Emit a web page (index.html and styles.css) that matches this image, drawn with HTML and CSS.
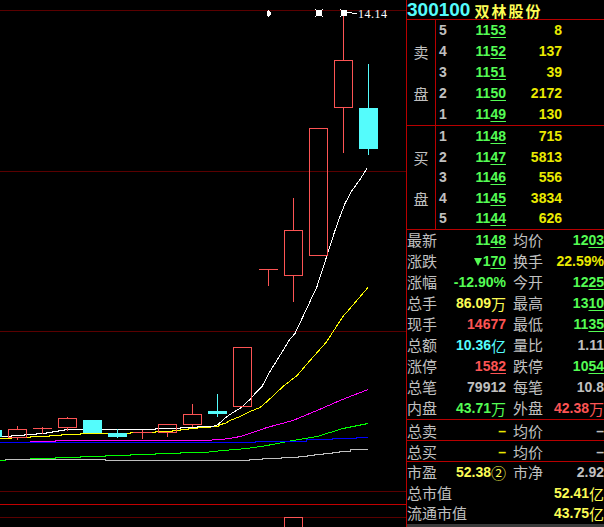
FILE: index.html
```html
<!DOCTYPE html>
<html lang="zh">
<head>
<meta charset="utf-8">
<title>300100 双林股份</title>
<link rel="stylesheet" href="styles.css">
</head>
<body>
<svg class="chart" width="406" height="527" viewBox="0 0 406 527" xmlns="http://www.w3.org/2000/svg">
  <line class="gd" x1="0" y1="10.5" x2="406" y2="10.5"/>
  <line class="gd" x1="0" y1="171.5" x2="406" y2="171.5"/>
  <line class="gd" x1="0" y1="331.5" x2="406" y2="331.5"/>
  <line class="gd" x1="0" y1="491.5" x2="406" y2="491.5"/>
  <line class="gb" x1="0" y1="504.5" x2="406" y2="504.5"/>
  <line class="gd" x1="0" y1="517.5" x2="406" y2="517.5"/>

  <polyline class="ma m60" points="0,460.5 5,460.5 5,459.5 30,459.5 30,458.5 55,458.5 55,457.5 80,457.5 80,456.5 105,456.5 105,455.5 130,455.5 130,454.5 155,454.5 155,453.5 180,453.5 180,452.5 205,452.5 223,450.5 247,448.5 267,445.5 293,440.5 317,436.5 343,428.5 368,423.5"/>
  <polyline class="ma m120" points="5,459.5 105,459.5 105,460.5 249,460.5 249,459.5 262,459.5 262,458.5 281,458.5 281,457.5 298,457.5 298,456.5 307,456.5 307,455.5 314,455.5 314,454.5 323,454.5 323,453.5 332,453.5 332,452.5 339,452.5 339,451.5 350,451.5 350,449.5 368,449.5"/>
  <polyline class="ma m30" points="0,442.5 255,442.5 255,441.5 306,441.5 306,439.5 332,439.5 332,438.5 356,438.5 356,437.5 368,437.5"/>
  <polyline class="ma m20" points="30,441.5 55,441.5 55,440.5 205,440.5 220,439.5 230,438.5 240,436.5 253,432.5 267,427.5 293,420.5 317,410.5 340,400.5 368,389.5"/>
  <polyline class="ma m10" points="0,438.5 11,438.5 11,437.5 30,437.5 30,436.5 49,436.5 49,435.5 61,435.5 61,434.5 80,434.5 80,433.5 130,433.5 130,432.5 155,432.5 155,431.5 172,431.5 172,430.5 180,430.5 180,429.5 188,429.5 188,428.5 197,428.5 197,427.5 210,427.5 212,426.5 218,426.5 220,424.5 225,423.5 230,420.5 240,416.5 250,411.5 260,407.5 267,401.5 283,386.5 297,375.5 310,360.5 326,342.5 343,316.5 356,301.5 368,287.5"/>
  <polyline class="ma m5" points="0,436.5 11,436.5 11,435.5 24,435.5 24,434.5 36,434.5 36,433.5 46,433.5 46,432.5 52,432.5 52,431.5 58,431.5 58,430.5 64,430.5 64,429.5 155,429.5 155,428.5 180,428.5 180,427.5 197,427.5 197,426.5 213,426.5 218,424.5 227,416.5 233,412.5 240,408.5 250,399.5 256,392.5 262,386.5 270,371.5 283,350.5 289,340.5 295,333.5 303,316.5 317,286.5 327,255.5 335,230.5 340,216.5 345,203.5 352,190.5 360,179.5 367,168.5"/>

  <rect class="kd" x="-17" y="430" width="19" height="7"/>

  <line class="wu" x1="17.5" y1="426" x2="17.5" y2="429"/>
  <line class="wu" x1="17.5" y1="437" x2="17.5" y2="440"/>
  <rect class="ku" x="8.5" y="429.5" width="18" height="8"/>

  <line class="wu" x1="42.5" y1="427" x2="42.5" y2="434"/>
  <line class="wu" x1="33" y1="428.5" x2="52" y2="428.5"/>

  <line class="wu" x1="67.5" y1="417" x2="67.5" y2="418"/>
  <line class="wu" x1="67.5" y1="427" x2="67.5" y2="431"/>
  <rect class="ku" x="58.5" y="418.5" width="18" height="9"/>

  <rect class="kd" x="83" y="420" width="19" height="13"/>

  <line class="wd" x1="117.5" y1="429" x2="117.5" y2="438"/>
  <rect class="kd" x="108" y="433" width="19" height="4"/>

  <line class="wu" x1="142.5" y1="430" x2="142.5" y2="439"/>
  <line class="wu" x1="133" y1="432.5" x2="152" y2="432.5"/>

  <line class="wu" x1="167.5" y1="432" x2="167.5" y2="437"/>
  <rect class="ku" x="158.5" y="424.5" width="18" height="8"/>

  <line class="wu" x1="192.5" y1="404" x2="192.5" y2="414"/>
  <line class="wu" x1="192.5" y1="424" x2="192.5" y2="427"/>
  <rect class="ku" x="183.5" y="414.5" width="18" height="10"/>

  <line class="wd" x1="217.5" y1="394" x2="217.5" y2="417"/>
  <rect class="kd" x="208" y="411" width="19" height="3"/>

  <rect class="ku" x="233.5" y="347.5" width="18" height="59"/>

  <line class="wu" x1="259" y1="269.5" x2="278" y2="269.5"/>
  <line class="wu" x1="268.5" y1="269" x2="268.5" y2="286"/>

  <line class="wu" x1="293.5" y1="198" x2="293.5" y2="230"/>
  <line class="wu" x1="293.5" y1="275" x2="293.5" y2="302"/>
  <rect class="ku" x="284.5" y="230.5" width="18" height="45"/>

  <rect class="ku" x="309.5" y="128.5" width="18" height="127"/>

  <line class="wu" x1="343.5" y1="14" x2="343.5" y2="60"/>
  <line class="wu" x1="343.5" y1="107" x2="343.5" y2="153"/>
  <rect class="ku" x="334.5" y="60.5" width="18" height="47"/>

  <line class="wd" x1="368.5" y1="64" x2="368.5" y2="155"/>
  <rect class="kd" x="359" y="108" width="19" height="41"/>

  <rect class="ku" x="284.5" y="517.5" width="18" height="20"/>

  <polygon class="mk" points="268.5,9.5 270.5,12 270.5,14.5 268.5,17 266.5,14.5 266.5,12"/>
  <rect class="mk" x="316" y="10" width="6" height="6"/>
  <rect class="mk" x="315" y="9" width="1" height="1"/>
  <rect class="mk" x="322" y="9" width="1" height="1"/>
  <rect class="mk" x="315" y="16" width="1" height="1"/>
  <rect class="mk" x="322" y="16" width="1" height="1"/>
  <rect class="mk" x="341" y="10" width="6" height="6"/>
  <rect class="mk" x="340" y="9" width="1" height="1"/>
  <rect class="mk" x="340" y="16" width="1" height="1"/>
  <line class="ml" x1="347" y1="12.5" x2="352" y2="12.5"/>
  <line class="ml" x1="352" y1="13.5" x2="357" y2="13.5"/>
  <text class="hi" x="358" y="18">14.14</text>
</svg>

<div class="panel">
  <div class="hdr"><span class="code">300100</span><span class="name">双林股份</span></div>

  <div class="book sell">
    <div class="side"><span></span><span>卖</span><span></span><span>盘</span><span></span></div>
    <div class="levels">
      <div class="lv"><span class="n">5</span><span class="p">11<u>53</u></span><span class="q">8</span></div>
      <div class="lv"><span class="n">4</span><span class="p">11<u>52</u></span><span class="q">137</span></div>
      <div class="lv"><span class="n">3</span><span class="p">11<u>51</u></span><span class="q">39</span></div>
      <div class="lv"><span class="n">2</span><span class="p">11<u>50</u></span><span class="q">2172</span></div>
      <div class="lv"><span class="n">1</span><span class="p">11<u>49</u></span><span class="q">130</span></div>
    </div>
  </div>

  <div class="book buy">
    <div class="side"><span></span><span>买</span><span></span><span>盘</span><span></span></div>
    <div class="levels">
      <div class="lv"><span class="n">1</span><span class="p">11<u>48</u></span><span class="q">715</span></div>
      <div class="lv"><span class="n">2</span><span class="p">11<u>47</u></span><span class="q">5813</span></div>
      <div class="lv"><span class="n">3</span><span class="p">11<u>46</u></span><span class="q">556</span></div>
      <div class="lv"><span class="n">4</span><span class="p">11<u>45</u></span><span class="q">3834</span></div>
      <div class="lv"><span class="n">5</span><span class="p">11<u>44</u></span><span class="q">626</span></div>
    </div>
  </div>

  <div class="stats">
    <div class="st"><div class="c1"><span class="lb">最新</span><span class="v g">11<u>48</u></span></div><div class="c2"><span class="lb">均价</span><span class="v g">12<u>03</u></span></div></div>
    <div class="st"><div class="c1"><span class="lb">涨跌</span><span class="v g"><i class="tri"></i>1<u>70</u></span></div><div class="c2"><span class="lb">换手</span><span class="v y2">22.59%</span></div></div>
    <div class="st"><div class="c1"><span class="lb">涨幅</span><span class="v g">-12.90%</span></div><div class="c2"><span class="lb">今开</span><span class="v g">12<u>25</u></span></div></div>
    <div class="st"><div class="c1"><span class="lb">总手</span><span class="v y">86.09<span class="cj">万</span></span></div><div class="c2"><span class="lb">最高</span><span class="v g">13<u>10</u></span></div></div>
    <div class="st"><div class="c1"><span class="lb">现手</span><span class="v r">14677</span></div><div class="c2"><span class="lb">最低</span><span class="v g">11<u>35</u></span></div></div>
    <div class="st"><div class="c1"><span class="lb">总额</span><span class="v c">10.36<span class="cj">亿</span></span></div><div class="c2"><span class="lb">量比</span><span class="v w">1.11</span></div></div>
    <div class="st"><div class="c1"><span class="lb">涨停</span><span class="v r">15<u>82</u></span></div><div class="c2"><span class="lb">跌停</span><span class="v g">10<u>54</u></span></div></div>
    <div class="st"><div class="c1"><span class="lb">总笔</span><span class="v w">79912</span></div><div class="c2"><span class="lb">每笔</span><span class="v w">10.8</span></div></div>
    <div class="st"><div class="c1"><span class="lb">内盘</span><span class="v g">43.71<span class="cj">万</span></span></div><div class="c2"><span class="lb">外盘</span><span class="v r">42.38<span class="cj">万</span></span></div></div>
  </div>

  <div class="sum">
    <div class="st sm"><div class="c1"><span class="lb">总卖</span><span class="v y2">–</span></div><div class="c2"><span class="lb">均价</span><span class="v w">–</span></div></div>
  </div>
  <div class="sum">
    <div class="st sm"><div class="c1"><span class="lb">总买</span><span class="v y2">–</span></div><div class="c2"><span class="lb">均价</span><span class="v w">–</span></div></div>
  </div>

  <div class="val">
    <div class="st vr"><div class="c1"><span class="lb">市盈</span><span class="v y">52.38<span class="cj">②</span></span></div><div class="c2"><span class="lb">市净</span><span class="v w">2.92</span></div></div>
    <div class="st vr"><div class="full"><span class="lb">总市值</span><span class="v y">52.41<span class="cj">亿</span></span></div></div>
    <div class="st vr"><div class="full"><span class="lb">流通市值</span><span class="v y">43.75<span class="cj">亿</span></span></div></div>
  </div>
  <div class="foot"></div>
</div>
</body>
</html>
```

FILE: styles.css
```css
html, body {
  margin: 0;
  padding: 0;
  background: #000;
}
body {
  width: 604px;
  height: 527px;
  overflow: hidden;
  display: flex;
  align-items: flex-start;
}

/* ---------- chart ---------- */
.chart {
  display: block;
  flex: none;
  width: 406px;
  height: 527px;
  shape-rendering: crispEdges;
}
.gd { stroke: #5a0000; stroke-width: 1; }
.gb { stroke: #c00000; stroke-width: 1; }
.ma { fill: none; stroke-width: 1; }
.m5 { stroke: #ffffff; }
.m10 { stroke: #ffff00; }
.m20 { stroke: #ff00ff; }
.m30 { stroke: #0000ff; }
.m60 { stroke: #00ff00; }
.m120 { stroke: #c0c0c0; }
.ku { fill: none; stroke: #fc5454; stroke-width: 1; }
.kd { fill: #54fcfc; }
.wu { stroke: #fc5454; stroke-width: 1; }
.wd { stroke: #54fcfc; stroke-width: 1; }
.mk { fill: #ffffff; }
.ml { stroke: #ffffff; stroke-width: 1; }
.hi {
  fill: #ffffff;
  font-family: "Liberation Serif", serif;
  font-size: 12px;
  letter-spacing: 0.5px;
}

/* ---------- quote panel ---------- */
.panel {
  flex: none;
  width: 197px;
  height: 527px;
  border-left: 1px solid #b80000;
  display: flex;
  flex-direction: column;
  white-space: nowrap;
}
.hdr {
  height: 19px;
  border-bottom: 1px solid #b80000;
  display: flex;
  align-items: flex-start;
}
.code {
  font-family: "Liberation Sans", sans-serif;
  font-weight: bold;
  font-size: 19px;
  line-height: 19px;
  color: #54fcfc;
}
.name {
  font-family: "Noto Sans CJK SC", sans-serif;
  font-weight: bold;
  font-size: 15px;
  line-height: 22px;
  letter-spacing: 2px;
  color: #fcfc54;
  margin-left: 4px;
}

.book {
  display: flex;
  border-bottom: 1px solid #b80000;
}
.side {
  width: 28px;
  flex: none;
  border-right: 1px solid #b80000;
  display: flex;
  flex-direction: column;
}
.side span {
  display: block;
  height: 21px;
  text-align: center;
  font-family: "Noto Sans CJK SC", sans-serif;
  font-size: 15px;
  line-height: 22px;
  color: #c0c0c0;
}
.buy .side span { height: 20.6px; }

.levels {
  display: flex;
  flex-direction: column;
}
.lv {
  display: grid;
  grid-template-columns: 20px 47px 56px;
  padding-left: 3px;
  height: 21px;
  font-family: "Liberation Sans", sans-serif;
  font-weight: bold;
  font-size: 14px;
  line-height: 21px;
}
.buy .lv { height: 20.6px; line-height: 20.6px; }
.lv .n { color: #c0c0c0; }
.lv .p { color: #54fc54; text-align: right; }
.lv .q { color: #eaea00; text-align: right; }

u {
  text-decoration: underline;
  text-decoration-thickness: 1px;
  text-underline-offset: 2px;
}

.stats {
  border-bottom: 1px solid #b80000;
}
.st {
  display: flex;
  height: 21px;
}
.c1 {
  width: 99px;
  flex: none;
  display: flex;
  justify-content: space-between;
  align-items: flex-start;
}
.c2 {
  width: 91px;
  flex: none;
  margin-left: 7px;
  display: flex;
  justify-content: space-between;
  align-items: flex-start;
}
.full {
  width: 197px;
  flex: none;
  display: flex;
  justify-content: space-between;
  align-items: flex-start;
}
.lb {
  font-family: "Noto Sans CJK SC", sans-serif;
  font-size: 15px;
  line-height: 20px;
  color: #c0c0c0;
}
.v {
  font-family: "Liberation Sans", "Noto Sans CJK SC", sans-serif;
  font-weight: bold;
  font-size: 14px;
  line-height: 21px;
}
.cj {
  font-family: "Noto Sans CJK SC", sans-serif;
  font-weight: normal;
  font-size: 15px;
  line-height: 1;
  vertical-align: -2px;
}
.g { color: #54fc54; }
.r { color: #fc5454; }
.y { color: #fcfc54; }
.y2 { color: #eaea00; }
.c { color: #54fcfc; }
.w { color: #c0c0c0; }

.tri {
  display: inline-block;
  width: 0;
  height: 0;
  border-left: 4px solid transparent;
  border-right: 4px solid transparent;
  border-top: 8px solid #54fc54;
  margin-right: 1px;
}

.sum {
  border-bottom: 1px solid #b80000;
}
.st.sm {
  height: 19px;
  padding-top: 1px;
}
.st.sm .v { line-height: 20px; }

.st.vr { height: 20.7px; }

.foot {
  flex: 1;
  background: #3a3a3a;
}
```
